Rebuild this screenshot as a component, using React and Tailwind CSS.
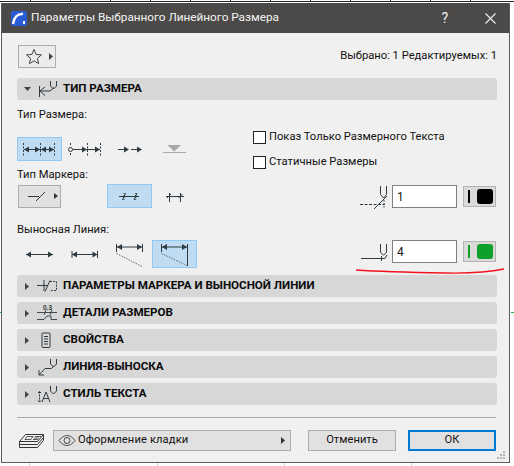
const INK = "#2f3b40";
const BODY = "text-[11.2px]";

function Svg({ w, h, children, className = "" }) {
  return (
    <svg width={w} height={h} viewBox={`0 0 ${w} ${h}`} fill="none" stroke={INK} strokeWidth="1" className={`shrink-0 block ${className}`}>
      {children}
    </svg>
  );
}
const R = ({ x, y }) => <path d={`M${x - 5} ${y - 3}L${x} ${y}L${x - 5} ${y + 3}Z`} fill={INK} stroke="none" />;
const Left = ({ x, y }) => <path d={`M${x + 5} ${y - 3}L${x} ${y}L${x + 5} ${y + 3}Z`} fill={INK} stroke="none" />;

function Cell({ selected, h = "h-6", children }) {
  return (
    <div className={`w-[45px] ${h} border flex items-center justify-center overflow-hidden ${selected ? "bg-[#bfdcf3] border-[#90c8f6]" : "border-transparent"}`}>
      {children}
    </div>
  );
}

const Tri = ({ open }) => (
  <div className="w-[21px] flex justify-center shrink-0">
    {open ? (
      <svg width="7" height="4" viewBox="0 0 7 4" className="ml-[-1px]"><path d="M0 0H7L3.5 4Z" fill="#444" /></svg>
    ) : (
      <svg width="4" height="7" viewBox="0 0 4 7" className="ml-[-2px]"><path d="M0 0V7L4 3.5Z" fill="#444" /></svg>
    )}
  </div>
);

function Header({ open, icon, children }) {
  return (
    <div className="h-[22px] w-[480px] bg-[#d7d7d7] rounded-[3px] flex items-center font-bold text-[11.6px] text-[#0b0b0b]">
      <Tri open={open} />
      <div className="w-[25px] h-[22px] shrink-0">{icon}</div>
      <span className="whitespace-nowrap">{children}</span>
    </div>
  );
}

const IconDim = (
  <Svg w={25} h={22}>
    <path d="M1.5 8V19M2 13L7 9M2 13L7 17.5M2 13H12L16 9.5" />
    <path d="M12.5 3V8L15.5 11L18.5 8V3" />
  </Svg>
);
const IconMarker = (
  <Svg w={25} h={22} className="overflow-visible">
    <path d="M-1 10.5H10M6 5V16M7 16.5L12 5.5" />
    <path d="M12 6.5H18.5V15.5H12" strokeDasharray="2 1.2" />
  </Svg>
);
const IconDetails = (
  <Svg w={25} h={22} className="overflow-visible">
    <text x="5" y="7.5" fontSize="6.5" fill={INK} stroke="none" fontFamily="Liberation Sans">0.3</text>
    <path d="M-1 10.5H19M6 13L8 8M12 13L14 8" strokeWidth="0.9" />
    <path d="M-1 17.5H6L9 14H13V17.5H19" strokeWidth="0.9" />
  </Svg>
);
const IconProps = (
  <Svg w={25} h={22}>
    <rect x="4" y="4" width="8" height="14.5" rx="0.8" />
    <path d="M6 7.5H10M6 10H10M6 12.5H10M6 15H10" />
  </Svg>
);
const IconLeader = (
  <Svg w={25} h={22}>
    <path d="M1 19L7 12.5M1 14V19H6M7 12.5H13.5L16.5 9.5" />
    <path d="M12.5 3V8L15.5 11L18.5 8V3" />
  </Svg>
);
const IconTextStyle = (
  <Svg w={25} h={22} className="overflow-visible">
    <path d="M1.5 8.5V19" strokeDasharray="2 1" />
    <path d="M0 10L1.5 8.5L3 10M0 17.5L1.5 19L3 17.5" />
    <path d="M4 19L8 9L12 19M5.5 15.5H10.5" />
    <path d="M12.5 3V8L15.5 11L18.5 8V3" />
  </Svg>
);

function ColorBtn({ color }) {
  return (
    <div className="w-[33px] h-[21px] bg-[#dadada] border border-[#b4b4b4] flex items-center ml-[6px]">
      <div className="w-[2px] h-[13px] ml-[4px]" style={{ background: color }} />
      <div className="w-4 h-[15px] ml-[7px] rounded-[3px]" style={{ background: color }} />
    </div>
  );
}
function Field({ value, color, icon }) {
  return (
    <div className="flex items-center justify-end h-[23px] w-full">
      <div className="mr-[4px]">{icon}</div>
      <div className="w-[65px] h-[23px] bg-white border border-[#808080] flex items-center pl-[4px] text-[12px] leading-none text-[#111]">{value}</div>
      <ColorBtn color={color} />
      <div className="w-px" />
    </div>
  );
}

function Check({ children, className }) {
  return (
    <div className={`flex items-center h-4 ${className}`}>
      <div className="w-[13px] h-[13px] border border-[#222] bg-white" />
      <span className={`ml-[3px] ${BODY} whitespace-nowrap`}>{children}</span>
    </div>
  );
}

function Button({ children, primary }) {
  return (
    <div className={`w-[88px] h-[21px] flex items-center justify-center ${BODY} bg-[#e1e1e1] ${primary ? "border-2 border-[#0078d4]" : "border border-[#adadad]"}`}>
      {children}
    </div>
  );
}

export default function App() {
  return (
    <div className="relative w-[514px] h-[466px] bg-white overflow-hidden" style={{ fontFamily: 'Roboto, "Noto Sans", sans-serif' }}>
      <svg width="514" height="466" className="absolute inset-0" fill="none">
        <path d="M0 1.5H514" stroke="#222" />
        <path d="M30.5 0V2M70.5 0V2M110.5 0V2M150.5 0V2M190.5 0V2M230.5 0V2M270.5 0V2M310.5 0V2M350.5 0V2M390.5 0V2M430.5 0V2M470.5 0V2" stroke="#222" />
        <path d="M29.5 463V466M157.5 463V466M284.5 463V466M411.5 463V466" stroke="#cfcfcf" />
        <path d="M0 312.5H1M511 312.5H514" stroke="#22b14c" />
      </svg>

      <div className="relative ml-px mt-[3px] w-[509px] h-[460px] bg-[#f0f0f0] border-x border-b border-[#5c5c5c] text-[#111]">
        <div className="h-[30px] bg-[#4b4a48] flex items-center text-[#f4f4f4] text-[11.75px]">
          <svg width="16" height="15" viewBox="0 0 16 15" className="ml-[9px] shrink-0">
            <rect width="16" height="15" rx="2" fill="#2a5bd7" />
            <path d="M2 13C3 6 7 2.5 12 3" stroke="#fff" strokeWidth="2.4" fill="none" />
            <rect x="12" y="10" width="2" height="3" fill="#fff" />
          </svg>
          <span className="ml-[4px] whitespace-nowrap">Параметры Выбранного Линейного Размера</span>
          <span className="ml-auto mr-[37px] text-[14px] leading-none">?</span>
          <svg width="11" height="11" viewBox="0 0 11 11" className="mr-[13px] shrink-0"><path d="M0.5 0.5L10.5 10.5M10.5 0.5L0.5 10.5" stroke="#f4f4f4" strokeWidth="1.1" /></svg>
        </div>

        <div className="pl-[15px]">
          <div className="flex items-center justify-between h-6 mt-[11px] w-[480px]">
            <div className="w-[38px] h-[23px] ml-px border border-[#adadad] bg-[#ececec] flex items-center">
              <svg width="18" height="17" viewBox="0 0 18 17" className="ml-[6px]" fill="none"><path d="M9 1.5L11.1 6.4L16.4 6.9L12.4 10.4L13.6 15.6L9 12.9L4.4 15.6L5.6 10.4L1.6 6.9L6.9 6.4Z" stroke="#444" /></svg>
              <svg width="4" height="7" viewBox="0 0 4 7" className="ml-[6px]"><path d="M0 0V7L4 3.5Z" fill="#444" /></svg>
            </div>
            <span className={`${BODY} whitespace-nowrap`}>Выбрано: 1 Редактируемых: 1</span>
          </div>

          <div className="mt-[10px]"><Header open icon={IconDim}>ТИП РАЗМЕРА</Header></div>

          <div className="flex">
            <div className="w-[236px]">
              <div className={`mt-[7px] h-4 ${BODY} leading-4`}>Тип Размера:</div>
              <div className="mt-[14px] flex">
                <Cell selected>
                  <Svg w={45} h={24}>
                    <path d="M6.5 6V19M23.5 6V19M37.5 6V19" strokeDasharray="2 1.5" />
                    <path d="M7 12.5H37" />
                    <Left x={7} y={12.5} /><R x={23} y={12.5} /><Left x={24} y={12.5} /><R x={37} y={12.5} />
                  </Svg>
                </Cell>
                <Cell>
                  <Svg w={45} h={24}>
                    <circle cx="8.5" cy="12.5" r="2" />
                    <path d="M8.5 6V8M8.5 16V19M25.5 6V19M38.5 6V19" strokeDasharray="2 1.5" />
                    <path d="M11 12.5H38" />
                    <R x={25} y={12.5} /><R x={38} y={12.5} />
                  </Svg>
                </Cell>
                <Cell>
                  <Svg w={45} h={24}>
                    <path d="M11 12.5H21M24 12.5H34" />
                    <R x={22} y={12.5} /><R x={35} y={12.5} />
                  </Svg>
                </Cell>
                <Cell>
                  <Svg w={45} h={24}>
                    <path d="M11 15.5H34" stroke="#aaa" />
                    <path d="M15.5 8H29L22.2 14.5Z" fill="#a6a6a6" stroke="none" />
                  </Svg>
                </Cell>
              </div>

              <div className={`mt-[6px] h-4 ${BODY} leading-4`}>Тип Маркера:</div>
              <div className="mt-px flex">
                <div className="w-[45px] h-6 flex items-center justify-center">
                  <div className="w-[43px] h-[23px] bg-[#e1e1e1] border border-[#adadad] flex items-center">
                    <svg width="24" height="14" viewBox="0 0 24 14" fill="none" stroke={INK} className="ml-[9px] shrink-0"><path d="M0 7.5H11M8 12L17 3" /></svg>
                    <svg width="4" height="6" viewBox="0 0 4 6" className="ml-[2px]"><path d="M0 0V6L4 3Z" fill="#333" /></svg>
                  </div>
                </div>
                <div className="w-[45px]" />
                <Cell selected>
                  <Svg w={45} h={24}>
                    <path d="M12 12.5H32M15.5 16L18.5 9M27 16L30 9" />
                    <path d="M17 9V16M28.7 9V16" strokeDasharray="1 1" />
                  </Svg>
                </Cell>
                <Cell>
                  <Svg w={45} h={24}>
                    <path d="M17.5 9V18M28.5 9V18M14 12.5H32" />
                    <path d="M15 14L19 10M26.5 14L30.5 10" />
                  </Svg>
                </Cell>
              </div>

              <div className={`mt-[14px] h-4 ${BODY} leading-4`}>Выносная Линия:</div>
              <div className="mt-[2px] flex">
                <Cell h="h-7">
                  <Svg w={45} h={28}>
                    <path d="M9 14.5H36" /><Left x={9} y={14.5} /><R x={36} y={14.5} />
                  </Svg>
                </Cell>
                <Cell h="h-7">
                  <Svg w={45} h={28}>
                    <path d="M10 11V18M35.5 11V18M10 14.5H35.5" /><Left x={10} y={14.5} /><R x={35.5} y={14.5} />
                  </Svg>
                </Cell>
                <Cell h="h-7">
                  <Svg w={45} h={28}>
                    <path d="M9.5 4V12M35.5 4V12M9.5 7H35.5" /><Left x={10} y={7} /><R x={35} y={7} />
                    <path d="M9.5 13.5L35 26.5" strokeDasharray="1.5 1.2" stroke="#666" />
                  </Svg>
                </Cell>
                <Cell selected h="h-7">
                  <Svg w={45} h={28}>
                    <path d="M9.5 4V12M35.5 4V26M9.5 7H35.5" /><Left x={10} y={7} /><R x={35} y={7} />
                    <path d="M9.5 13.5L35 25.5" strokeDasharray="1.5 1.2" stroke="#666" />
                  </Svg>
                </Cell>
              </div>
            </div>

            <div className="w-[244px]">
              <Check className="mt-[29px]">Показ Только Размерного Текста</Check>
              <Check className="mt-[9px]">Статичные Размеры</Check>
              <div className="mt-[15px]">
                <Field value="1" color="#000" icon={
                  <Svg w={28} h={24}>
                    <path d="M20.5 1V9.5L23.5 13L26.5 9.5V1" />
                    <path d="M0 19.5H25" strokeDasharray="3 1.5" />
                    <path d="M13 25L27 11" />
                    <path d="M24 15V24" strokeDasharray="1.5 1.5" />
                  </Svg>
                } />
              </div>
              <div className="mt-8">
                <Field value="4" color="#0f9f2b" icon={
                  <Svg w={28} h={24}>
                    <path d="M20.5 4V12.5L23.5 15L26.5 12.5V4" />
                    <path d="M1 18.5H25L27 15M21.5 16V21" />
                  </Svg>
                } />
              </div>
            </div>
          </div>

          <div className="mt-[7px] flex flex-col gap-[5px]">
            <Header icon={IconMarker}>ПАРАМЕТРЫ МАРКЕРА И ВЫНОСНОЙ ЛИНИИ</Header>
            <Header icon={IconDetails}>ДЕТАЛИ РАЗМЕРОВ</Header>
            <Header icon={IconProps}>СВОЙСТВА</Header>
            <Header icon={IconLeader}>ЛИНИЯ-ВЫНОСКА</Header>
            <Header icon={IconTextStyle}>СТИЛЬ ТЕКСТА</Header>
          </div>

          <div className="mt-3 h-px w-[479px] bg-[#a9a9a9]" />

          <div className="mt-3 flex items-center w-[479px] h-[21px]">
            <svg width="27" height="16" viewBox="0 0 27 16" fill="none" stroke="#333" className="ml-[1px] shrink-0">
              <path d="M7.5 1.5H25.5L19.5 8.5H1.5Z" />
              <path d="M1.5 8.5V11.5H19.5L25.5 4.5V1.5M1.5 11.5V14.5H19.5L25.5 7.5V4.5" />
              <path d="M9 3.5H15L13 6.5H7ZM17 3.5H23M16 5H21M15 6.5H20" strokeWidth="0.8" />
            </svg>
            <div className={`ml-[8px] w-[238px] h-[21px] bg-[#e1e1e1] border border-[#adadad] flex items-center ${BODY} tracking-[0.1px]`}>
              <svg width="18" height="11" viewBox="0 0 18 11" fill="none" stroke="#444" className="ml-[4px] shrink-0">
                <path d="M1 5.5C4 1.5 7 0.5 9 0.5C11 0.5 14 1.5 17 5.5C14 9.5 11 10.5 9 10.5C7 10.5 4 9.5 1 5.5Z" />
                <circle cx="9" cy="5.5" r="3" />
              </svg>
              <span className="ml-[2px] whitespace-nowrap">Оформление кладки</span>
              <svg width="4" height="7" viewBox="0 0 4 7" className="ml-auto mr-[5px]"><path d="M0 0V7L4 3.5Z" fill="#333" /></svg>
            </div>
            <div className="ml-[17px]"><Button>Отменить</Button></div>
            <div className="ml-3"><Button primary>ОК</Button></div>
          </div>
        </div>

        <svg width="10" height="10" viewBox="0 0 10 10" className="absolute right-[3px] bottom-[2px]">
          <path d="M7 1h2v2H7zM4 4h2v2H4zM7 4h2v2H7zM1 7h2v2H1zM4 7h2v2H4zM7 7h2v2H7z" fill="#b5b5b5" />
        </svg>

        <svg width="150" height="8" viewBox="0 0 150 8" fill="none" className="absolute left-[353px] top-[265px]">
          <path d="M1 2C30 4 60 4.5 90 5C115 5.5 135 4 149 1" stroke="#f0141e" strokeWidth="1.4" />
        </svg>
      </div>
    </div>
  );
}
